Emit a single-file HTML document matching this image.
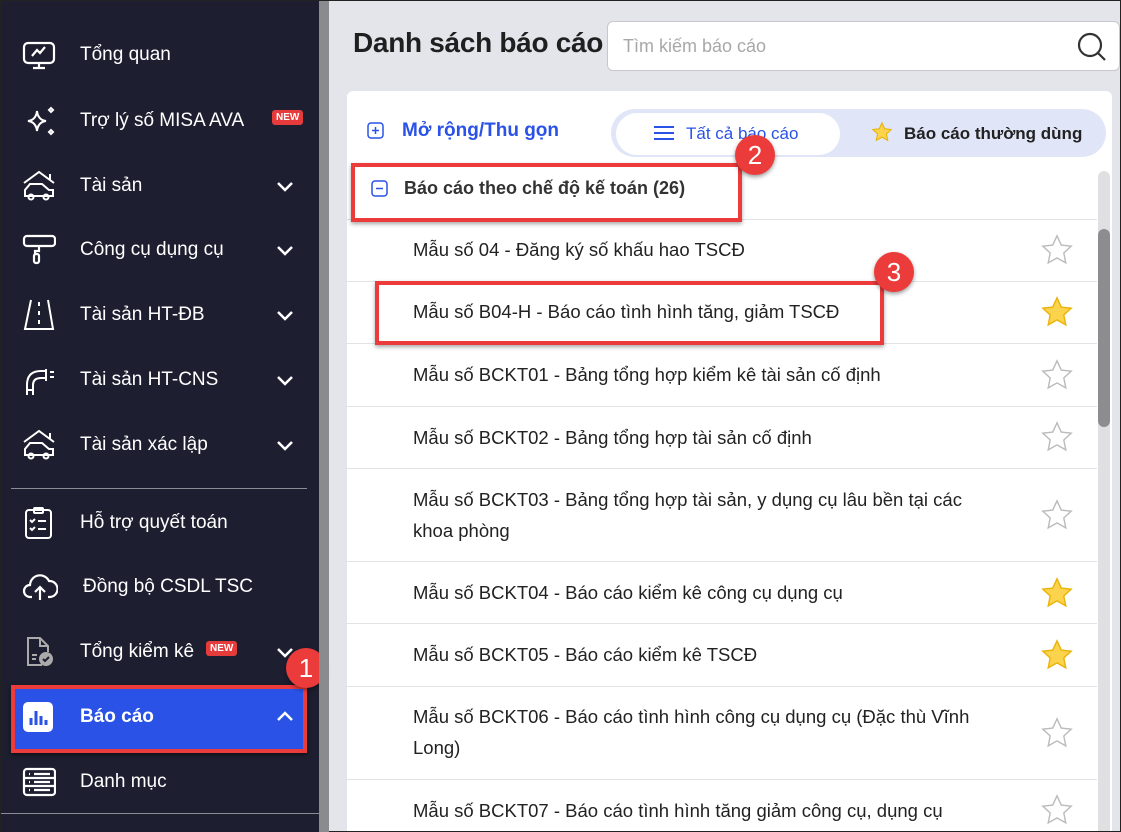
<!DOCTYPE html>
<html style="width:1121px;height:832px;overflow:hidden"><head><meta charset="utf-8"><style>
*{margin:0;padding:0;box-sizing:border-box}
body{width:1121px;height:832px;overflow:hidden;font-family:"Liberation Sans",sans-serif;background:#e3e5eb;position:relative;border:1px solid #222}
.sb{position:absolute;left:0;top:0;width:318px;height:832px;background:#1d1f30;color:#fff}
.sbar{position:absolute;left:318px;top:0;width:10px;height:832px;background:#8a8b8e}
.it{position:absolute;left:0;width:318px;height:40px;font-size:19px;display:flex;align-items:center}
.it .tx{position:absolute;left:79px}
.it svg.ic{position:absolute;left:21px}
.chev{position:absolute;left:274px;width:20px;height:20px}
.new{background:#e53b3b;color:#fff;font-size:10px;font-weight:bold;padding:2px 4px;border-radius:3px;position:absolute}
.main{position:absolute;left:328px;top:0;right:0;bottom:0;overflow:hidden}
h1{position:absolute;left:24px;top:26px;font-size:28px;font-weight:bold;color:#1f1f1f;letter-spacing:-.3px}
.search{position:absolute;left:278px;top:20px;width:513px;height:50px;background:#fff;border:1px solid #c8c8cc;border-radius:6px}
.search span{position:absolute;left:15px;top:14px;color:#a8a8a8;font-size:18px}
.card{position:absolute;left:18px;top:90px;width:765px;height:760px;background:#fff;border-radius:6px}
.row{position:absolute;left:0;width:750px;border-top:1px solid #e3e3e6;font-size:18.5px;color:#222}
.row .t{position:absolute;left:66px;line-height:31px}
.star{position:absolute;left:693px;width:34px;height:34px}
.red{position:absolute;border:4px solid #ec3b3b;box-shadow:0 2px 4px rgba(0,0,0,.35)}
.num{position:absolute;width:40px;height:40px;border-radius:50%;background:#ec3b3b;color:#fff;font-size:26px;text-align:center;line-height:40px;box-shadow:0 2px 4px rgba(0,0,0,.4)}
</style></head><body>
<div class="sb">
 <div class="it" style="top:34px"><svg class="ic" width="34" height="34" viewBox="0 0 34 34" fill="none" stroke="#fff" stroke-width="2.2"><rect x="2" y="5" width="30" height="20" rx="4"/><path d="M10 18l5-6 3 3 5-6M17 25v5M11 30h12"/></svg><span class="tx">Tổng quan</span></div>
 <div class="it" style="top:100px"><svg class="ic" width="34" height="34" viewBox="0 0 34 34" fill="none" stroke="#fff" stroke-width="2"><path d="M15 7q1 9 9 10q-8 1-9 10q-1-9-9-10q8-1 9-10z"/><path d="M31 6l-2 2-2-2 2-2z M31 28l-2 2-2-2 2-2z"/></svg><span class="tx">Trợ lý số MISA AVA</span><span class="new" style="left:271px;top:9px">NEW</span></div>
 <div class="it" style="top:165px"><svg class="ic" width="34" height="34" viewBox="0 0 34 34" fill="none" stroke="#fff" stroke-width="2"><path d="M2 14L17 3l15 11M28 11V5M3 27v-6l5-6h12l7 6h4v6z"/><circle cx="9" cy="28" r="2.5"/><circle cx="24" cy="28" r="2.5"/></svg><span class="tx">Tài sản</span><svg class="chev" viewBox="0 0 20 20" fill="none" stroke="#fff" stroke-width="2.5"><path d="M3 7l7 7 7-7"/></svg></div>
 <div class="it" style="top:229px"><svg class="ic" width="34" height="34" viewBox="0 0 34 34" fill="none" stroke="#fff" stroke-width="2.2"><rect x="2" y="3" width="31" height="10" rx="3"/><path d="M17 13v5h-4v3"/><rect x="12" y="21" width="5" height="9" rx="2"/></svg><span class="tx">Công cụ dụng cụ</span><svg class="chev" viewBox="0 0 20 20" fill="none" stroke="#fff" stroke-width="2.5"><path d="M3 7l7 7 7-7"/></svg></div>
 <div class="it" style="top:294px"><svg class="ic" width="34" height="34" viewBox="0 0 34 34" fill="none" stroke="#fff" stroke-width="2"><path d="M9 2L3 31h28L26 2M17 4v4M17 13v4M17 22v4"/></svg><span class="tx">Tài sản HT-ĐB</span><svg class="chev" viewBox="0 0 20 20" fill="none" stroke="#fff" stroke-width="2.5"><path d="M3 7l7 7 7-7"/></svg></div>
 <div class="it" style="top:359px"><svg class="ic" width="34" height="34" viewBox="0 0 34 34" fill="none" stroke="#fff" stroke-width="2"><path d="M5 32V22q0-14 14-14h6M11 32V22q0-7 8-7h6M24 6v12M28 9h4M28 14h4M5 27h6"/></svg><span class="tx">Tài sản HT-CNS</span><svg class="chev" viewBox="0 0 20 20" fill="none" stroke="#fff" stroke-width="2.5"><path d="M3 7l7 7 7-7"/></svg></div>
 <div class="it" style="top:424px"><svg class="ic" width="34" height="34" viewBox="0 0 34 34" fill="none" stroke="#fff" stroke-width="2"><path d="M2 14L17 3l15 11M28 11V5M3 27v-6l5-6h12l7 6h4v6z"/><circle cx="9" cy="28" r="2.5"/><circle cx="24" cy="28" r="2.5"/></svg><span class="tx">Tài sản xác lập</span><svg class="chev" viewBox="0 0 20 20" fill="none" stroke="#fff" stroke-width="2.5"><path d="M3 7l7 7 7-7"/></svg></div>
 <div style="position:absolute;left:10px;top:487px;width:296px;height:1px;background:#8a8c96"></div>
 <div class="it" style="top:502px"><svg class="ic" width="34" height="34" viewBox="0 0 34 34" fill="none" stroke="#fff" stroke-width="2"><rect x="4" y="4" width="25" height="28" rx="3"/><rect x="12" y="2" width="9" height="5" rx="1"/><path d="M8 14l2 2 3-3M16 15h8M8 22l2 2 3-3M16 23h8"/></svg><span class="tx">Hỗ trợ quyết toán</span></div>
 <div class="it" style="top:566px"><svg class="ic" width="36" height="34" viewBox="0 0 36 34" fill="none" stroke="#fff" stroke-width="2.2"><path d="M10 27H8a6 6 0 0 1 0-12a10 10 0 0 1 19-4a8 8 0 0 1 1 16h-2M18 30V18M13 22l5-5 5 5"/></svg><span class="tx" style="left:82px">Đồng bộ CSDL TSC</span></div>
 <div class="it" style="top:631px"><svg class="ic" width="34" height="34" viewBox="0 0 34 34" fill="none" stroke="#aaa" stroke-width="2"><path d="M20 30H6V3h12l8 8v6M18 3v8h8M10 20h5M10 24h4"/><circle cx="24" cy="24" r="6" fill="#aaa"/><path d="M21 24l2 2 4-4" stroke="#1d1f30"/></svg><span class="tx">Tổng kiểm kê</span><span class="new" style="left:205px;top:9px">NEW</span><svg class="chev" viewBox="0 0 20 20" fill="none" stroke="#fff" stroke-width="2.5"><path d="M3 7l7 7 7-7"/></svg></div>
 <div style="position:absolute;left:10px;top:684px;width:296px;height:68px;background:#2a52e6;border:4px solid #ec3b3b;box-shadow:0 2px 4px rgba(0,0,0,.5)"></div>
 <div class="it" style="top:696px"><svg class="ic" width="32" height="32" viewBox="0 0 32 32"><rect x="1" y="1" width="30" height="30" rx="5" fill="#fff"/><path d="M9 24v-7M14 24V10M19 24v-9M24 24v-5" stroke="#2a52e6" stroke-width="3"/></svg><span class="tx" style="font-weight:bold">Báo cáo</span><svg class="chev" viewBox="0 0 20 20" fill="none" stroke="#fff" stroke-width="2.5"><path d="M3 13l7-7 7 7"/></svg></div>
 <div class="it" style="top:761px"><svg class="ic" width="34" height="34" viewBox="0 0 34 34" fill="none" stroke="#fff" stroke-width="2.2"><rect x="2" y="4" width="31" height="26" rx="3"/><path d="M2 13h31M2 21h31M7 9h1M12 9h16M7 17h1M12 17h16M7 25h1M12 25h16"/></svg><span class="tx">Danh mục</span></div>
 <div style="position:absolute;left:0;top:812px;width:318px;height:1px;background:#8a8c96"></div>
 <div class="num" style="left:285px;top:647px">1</div>
</div>
<div class="sbar"></div>
<div class="main">
 <h1>Danh sách báo cáo</h1>
 <div class="search"><span>Tìm kiếm báo cáo</span><svg style="position:absolute;right:12px;top:10px" width="30" height="30" viewBox="0 0 30 30" fill="none" stroke="#333" stroke-width="2.2"><circle cx="13" cy="13" r="11"/><path d="M21 21l7 7"/></svg></div>
 <div class="card">
  <svg style="position:absolute;left:20px;top:31px" width="17" height="17" viewBox="0 0 17 17" fill="none" stroke="#2a52e6" stroke-width="1.5"><rect x="1" y="1" width="15" height="15" rx="3"/><path d="M8.5 5v7M5 8.5h7"/></svg>
  <span style="position:absolute;left:55px;top:29px;font-size:19px;color:#2a52e6;font-weight:bold">Mở rộng/Thu gọn</span>
  <div style="position:absolute;left:264px;top:18px;width:495px;height:48px;background:#e1e5f8;border-radius:24px"></div>
  <div style="position:absolute;left:269px;top:22px;width:224px;height:42px;background:#fff;border-radius:21px"></div>
  <svg style="position:absolute;left:307px;top:34px" width="20" height="16" viewBox="0 0 20 16" stroke="#2a52e6" stroke-width="2"><path d="M0 2h20M0 8h20M0 14h20"/></svg>
  <span style="position:absolute;left:339px;top:33px;font-size:17px;color:#2a52e6">Tất cả báo cáo</span>
  <svg style="position:absolute;left:524px;top:30px" width="22" height="22" viewBox="0 0 24 24"><path d="M12 2l3 6.5 7 .8-5.2 4.8 1.4 7L12 17.6 5.8 21.1l1.4-7L2 9.3l7-.8z" fill="#fcd34d" stroke="#eab308" stroke-width="1.2"/></svg>
  <span style="position:absolute;left:557px;top:33px;font-size:17px;color:#222;font-weight:bold">Báo cáo thường dùng</span>
  <svg style="position:absolute;left:24px;top:89px" width="17" height="17" viewBox="0 0 17 17" fill="none" stroke="#2a52e6" stroke-width="1.5"><rect x="1" y="1" width="15" height="15" rx="3"/><path d="M5 8.5h7"/></svg>
  <span style="position:absolute;left:57px;top:87px;font-size:18px;font-weight:bold;color:#333">Báo cáo theo chế độ kế toán (26)</span>
  <div class="row" style="top:128px;height:62px"><span class="t" style="top:14px">Mẫu số 04 - Đăng ký số khấu hao TSCĐ</span><svg class="star" style="top:13px" viewBox="0 0 24 24"><path d="M12 2l3 6.5 7 .8-5.2 4.8 1.4 7L12 17.6 5.8 21.1l1.4-7L2 9.3l7-.8z" fill="none" stroke="#bbb" stroke-width="1"/></svg></div>
  <div class="row" style="top:190px;height:62px"><span class="t" style="top:14px">Mẫu số B04-H - Báo cáo tình hình tăng, giảm TSCĐ</span><svg class="star" style="top:13px" viewBox="0 0 24 24"><path d="M12 2l3 6.5 7 .8-5.2 4.8 1.4 7L12 17.6 5.8 21.1l1.4-7L2 9.3l7-.8z" fill="#fcd34d" stroke="#eab308" stroke-width="1"/></svg></div>
  <div class="row" style="top:252px;height:63px"><span class="t" style="top:15px">Mẫu số BCKT01 - Bảng tổng hợp kiểm kê tài sản cố định</span><svg class="star" style="top:14px" viewBox="0 0 24 24"><path d="M12 2l3 6.5 7 .8-5.2 4.8 1.4 7L12 17.6 5.8 21.1l1.4-7L2 9.3l7-.8z" fill="none" stroke="#bbb" stroke-width="1"/></svg></div>
  <div class="row" style="top:315px;height:62px"><span class="t" style="top:15px">Mẫu số BCKT02 - Bảng tổng hợp tài sản cố định</span><svg class="star" style="top:13px" viewBox="0 0 24 24"><path d="M12 2l3 6.5 7 .8-5.2 4.8 1.4 7L12 17.6 5.8 21.1l1.4-7L2 9.3l7-.8z" fill="none" stroke="#bbb" stroke-width="1"/></svg></div>
  <div class="row" style="top:377px;height:93px"><span class="t" style="top:15px">Mẫu số BCKT03 - Bảng tổng hợp tài sản, y dụng cụ lâu bền tại các<br>khoa phòng</span><svg class="star" style="top:29px" viewBox="0 0 24 24"><path d="M12 2l3 6.5 7 .8-5.2 4.8 1.4 7L12 17.6 5.8 21.1l1.4-7L2 9.3l7-.8z" fill="none" stroke="#bbb" stroke-width="1"/></svg></div>
  <div class="row" style="top:470px;height:62px"><span class="t" style="top:15px">Mẫu số BCKT04 - Báo cáo kiểm kê công cụ dụng cụ</span><svg class="star" style="top:14px" viewBox="0 0 24 24"><path d="M12 2l3 6.5 7 .8-5.2 4.8 1.4 7L12 17.6 5.8 21.1l1.4-7L2 9.3l7-.8z" fill="#fcd34d" stroke="#eab308" stroke-width="1"/></svg></div>
  <div class="row" style="top:532px;height:63px"><span class="t" style="top:15px">Mẫu số BCKT05 - Báo cáo kiểm kê TSCĐ</span><svg class="star" style="top:14px" viewBox="0 0 24 24"><path d="M12 2l3 6.5 7 .8-5.2 4.8 1.4 7L12 17.6 5.8 21.1l1.4-7L2 9.3l7-.8z" fill="#fcd34d" stroke="#eab308" stroke-width="1"/></svg></div>
  <div class="row" style="top:595px;height:93px"><span class="t" style="top:14px">Mẫu số BCKT06 - Báo cáo tình hình công cụ dụng cụ (Đặc thù Vĩnh<br>Long)</span><svg class="star" style="top:29px" viewBox="0 0 24 24"><path d="M12 2l3 6.5 7 .8-5.2 4.8 1.4 7L12 17.6 5.8 21.1l1.4-7L2 9.3l7-.8z" fill="none" stroke="#bbb" stroke-width="1"/></svg></div>
  <div class="row" style="top:688px;height:80px"><span class="t" style="top:15px">Mẫu số BCKT07 - Báo cáo tình hình tăng giảm công cụ, dụng cụ</span><svg class="star" style="top:13px" viewBox="0 0 24 24"><path d="M12 2l3 6.5 7 .8-5.2 4.8 1.4 7L12 17.6 5.8 21.1l1.4-7L2 9.3l7-.8z" fill="none" stroke="#bbb" stroke-width="1"/></svg></div>
  <div style="position:absolute;left:751px;top:80px;width:12px;height:700px;background:#e0e0e2;border-radius:6px"></div>
  <div style="position:absolute;left:751px;top:138px;width:12px;height:198px;background:#8d8d8f;border-radius:6px"></div>
 </div>
 <div class="red" style="left:22px;top:162px;width:391px;height:59px"></div>
 <div class="num" style="left:406px;top:134px">2</div>
 <div class="red" style="left:46px;top:280px;width:509px;height:64px"></div>
 <div class="num" style="left:545px;top:251px">3</div>
</div>
</body></html>
